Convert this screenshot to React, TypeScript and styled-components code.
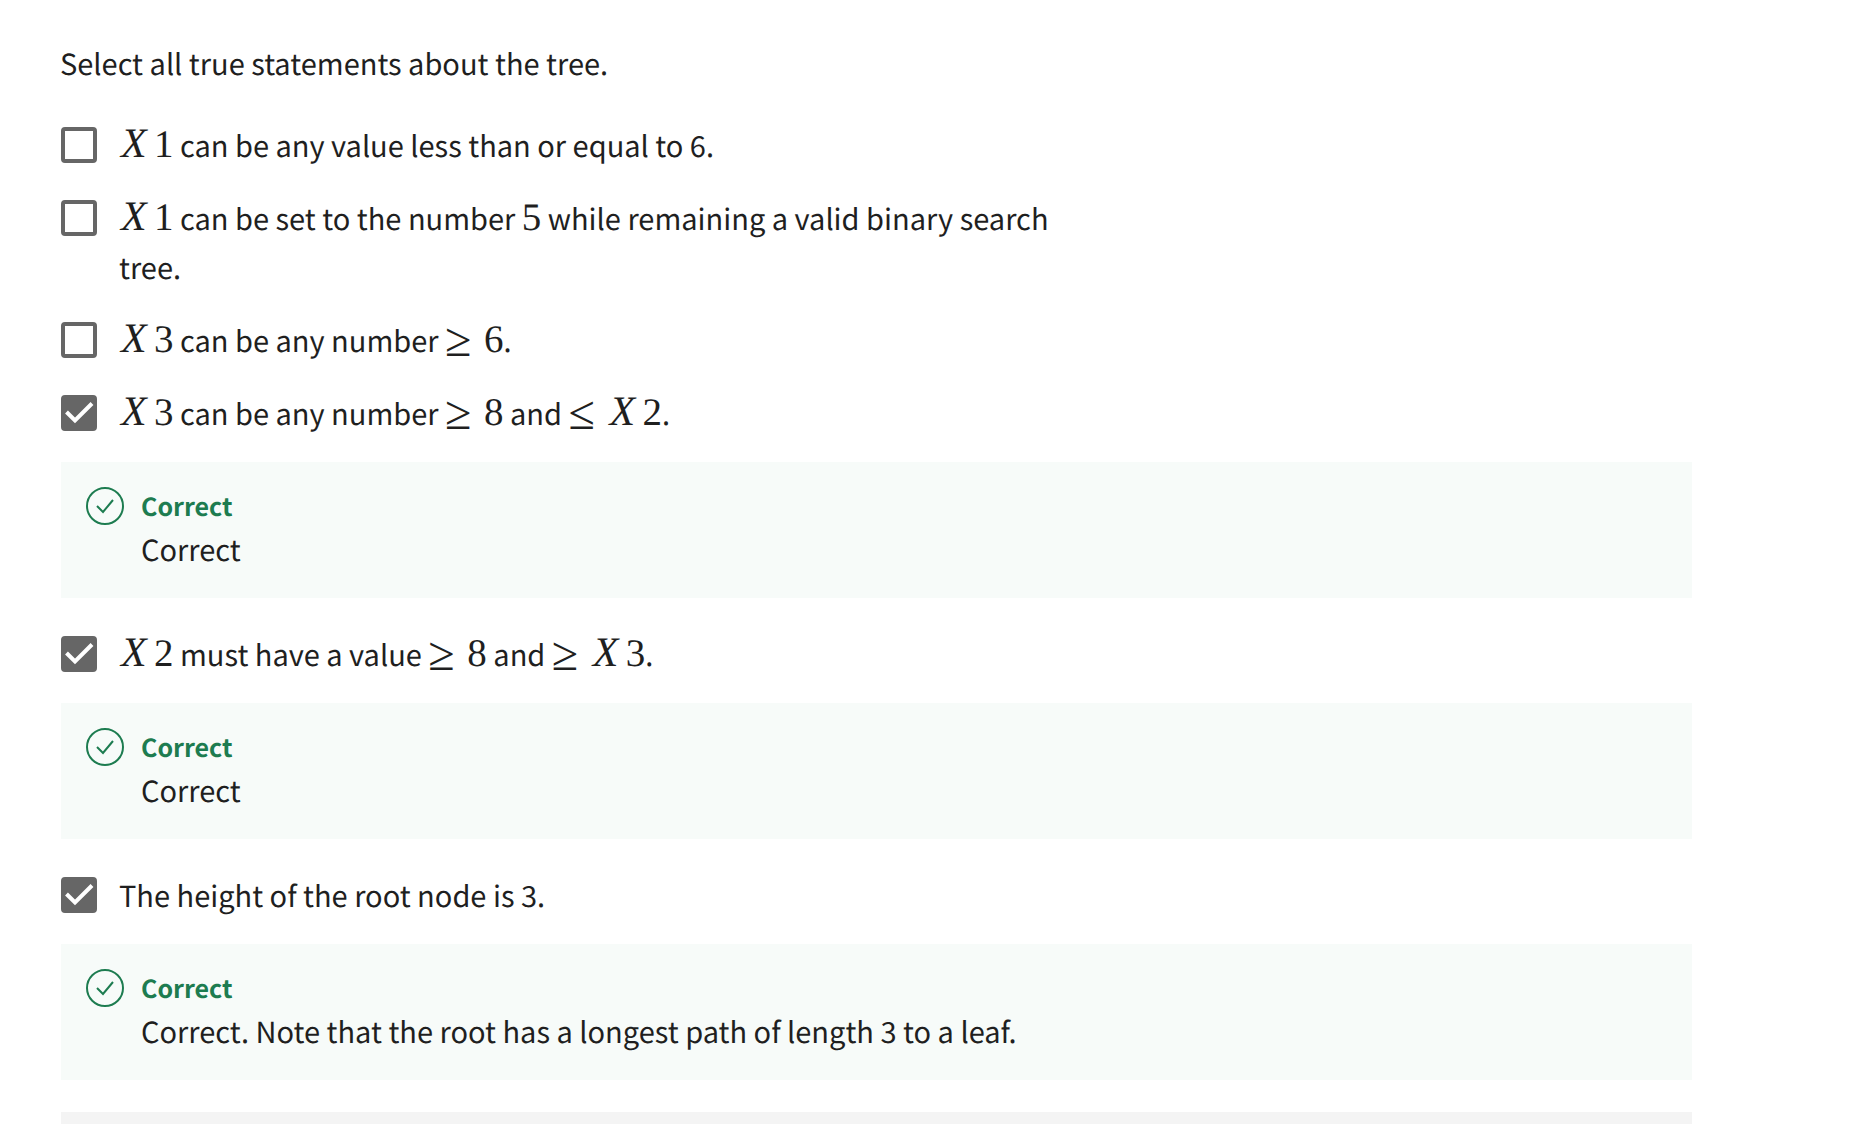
import React, { useId, useState } from "react";
import styled, { createGlobalStyle } from "styled-components";

const GlobalStyle = createGlobalStyle`
  *, *::before, *::after {
    box-sizing: border-box;
  }

  body {
    margin: 0;
    background: #ffffff;
    color: #1f1f1f;
    font-family: "Noto Sans CJK SC", "Noto Sans", sans-serif;
    font-size: 29px;
    line-height: 49px;
    text-rendering: geometricPrecision;
  }
`;

const Page = styled.main`
  padding: 39px 166px 0 60px;
`;

const Question = styled.fieldset`
  margin: 0;
  padding: 0;
  border: 0;
  min-width: 0;
`;

const Prompt = styled.legend`
  padding: 0;
  margin-bottom: 33px;
`;

const Options = styled.div`
  display: flex;
  flex-direction: column;
  gap: 24px;
  padding-left: 1px;
`;

const OptionBlock = styled.div<{ $spaced: boolean }>`
  display: flex;
  flex-direction: column;
  gap: 24px;
  margin-bottom: ${(p) => (p.$spaced ? "8px" : "0")};
`;

const OptionRow = styled.div`
  display: flex;
  align-items: flex-start;
  gap: 22px;
`;

const OptionLabel = styled.label`
  flex: 0 1 960px;
  min-width: 0;
`;

const Tick = styled.span`
  display: grid;
  flex: none;
  margin-top: 6px;
`;

const TickInput = styled.input`
  grid-area: 1 / 1;
  appearance: none;
  width: 36px;
  height: 36px;
  margin: 0;
  border: 4px solid #666666;
  border-radius: 4px;
  background: #ffffff;

  &:checked {
    background: #666666;
  }
`;

const TickMark = styled.svg`
  grid-area: 1 / 1;
  width: 36px;
  height: 36px;
  pointer-events: none;
`;

const MathText = styled.span`
  font-family: "Liberation Serif", serif;
  font-size: 39px;
  line-height: 40px;
`;

const Variable = styled.i`
  display: inline-block;
  width: 35px;
  padding-left: 2px;
  font-size: 42px;
`;

const Relation = styled.span`
  display: inline-block;
  width: 30px;
  margin-right: 9px;
  font-size: 48px;
  vertical-align: -4px;
`;

const Feedback = styled.section`
  display: flex;
  gap: 17px;
  padding: 21px 25px 29px;
  background: #f7fbf9;
`;

const FeedbackIcon = styled.svg`
  flex: none;
  width: 38px;
  height: 38px;
  margin-top: 4px;
`;

const FeedbackTitle = styled.h2`
  margin: 0;
  color: #1d7c50;
  font-size: 25px;
  line-height: 46px;
`;

const FeedbackText = styled.p`
  margin: 0;
  line-height: 40px;
`;

const NextPanel = styled.div`
  height: 12px;
  background: #f4f4f4;
`;

const V = ({ n }: { n: number }) => (
  <MathText>
    <Variable>X</Variable>
    {n}
  </MathText>
);

const Rel = ({ sign, children }: { sign: string; children: React.ReactNode }) => (
  <MathText>
    <Relation>{sign}</Relation>
    {children}
  </MathText>
);

type OptionProps = {
  children: React.ReactNode;
  initial?: boolean;
  feedback?: string;
};

function Option({ children, initial = false, feedback }: OptionProps) {
  const id = useId();
  const [checked, setChecked] = useState(initial);
  return (
    <OptionBlock $spaced={Boolean(feedback)}>
      <OptionRow>
        <Tick>
          <TickInput
            id={id}
            type="checkbox"
            checked={checked}
            onChange={(e) => setChecked(e.target.checked)}
          />
          {checked && (
            <TickMark viewBox="0 0 36 36" aria-hidden="true">
              <path d="M5.5 17 L14 25.5 L31 8.5" fill="none" stroke="#fff" strokeWidth="4" />
            </TickMark>
          )}
        </Tick>
        <OptionLabel htmlFor={id}>{children}</OptionLabel>
      </OptionRow>
      {feedback && (
        <Feedback>
          <FeedbackIcon viewBox="0 0 38 38" aria-hidden="true">
            <g fill="none" stroke="#1d7c50" strokeWidth="2">
              <circle cx="19" cy="19" r="18" />
              <path d="M11 19 L17 25 L27 13" />
            </g>
          </FeedbackIcon>
          <div>
            <FeedbackTitle>Correct</FeedbackTitle>
            <FeedbackText>{feedback}</FeedbackText>
          </div>
        </Feedback>
      )}
    </OptionBlock>
  );
}

export default function App() {
  return (
    <>
      <GlobalStyle />
      <Page>
        <Question>
          <Prompt>Select all true statements about the tree.</Prompt>
          <Options>
            <Option>
              <V n={1} /> can be any value less than or equal to 6.
            </Option>
            <Option>
              <V n={1} /> can be set to the number <MathText>5</MathText> while remaining a valid
              binary search tree.
            </Option>
            <Option>
              <V n={3} /> can be any number <Rel sign="≥">6</Rel>.
            </Option>
            <Option initial feedback="Correct">
              <V n={3} /> can be any number <Rel sign="≥">8</Rel> and{" "}
              <Rel sign="≤">
                <V n={2} />
              </Rel>
              .
            </Option>
            <Option initial feedback="Correct">
              <V n={2} /> must have a value <Rel sign="≥">8</Rel> and{" "}
              <Rel sign="≥">
                <V n={3} />
              </Rel>
              .
            </Option>
            <Option
              initial
              feedback="Correct. Note that the root has a longest path of length 3 to a leaf."
            >
              The height of the root node is 3.
            </Option>
            <NextPanel />
          </Options>
        </Question>
      </Page>
    </>
  );
}
